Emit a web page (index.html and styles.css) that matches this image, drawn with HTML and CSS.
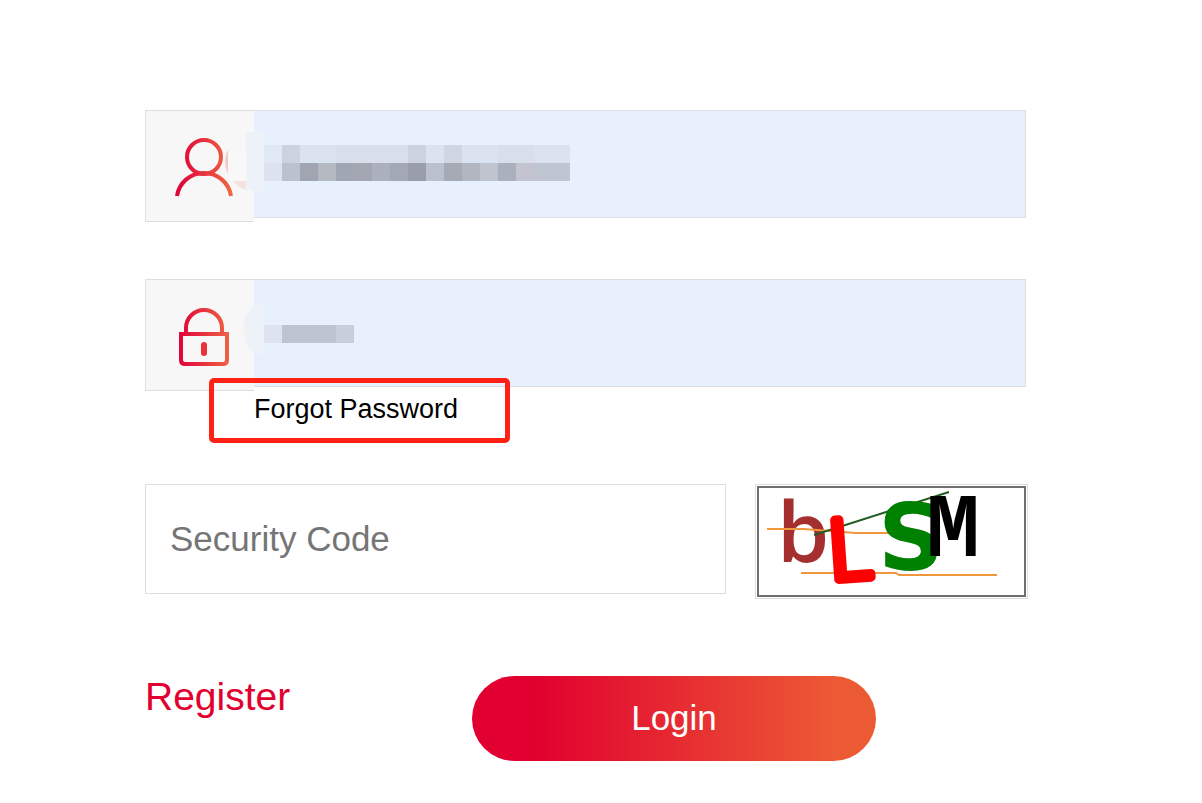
FILE: index.html
```html
<!DOCTYPE html>
<html lang="en">
<head>
  <meta charset="UTF-8">
  <meta name="viewport" content="width=device-width, initial-scale=1">
  <title>Login</title>
  <link rel="stylesheet" href="styles.css">
</head>
<body>
  <form class="login">
    <div class="field">
      <label class="field-icon" for="user" aria-label="User name">
        <svg width="62" height="62" viewBox="0 0 62 62" fill="none" stroke="url(#red)" stroke-width="4">
          <defs>
            <linearGradient id="red" gradientUnits="userSpaceOnUse" x1="2" y1="0" x2="60" y2="0">
              <stop offset="0.1" stop-color="#e1063a"/>
              <stop offset="1" stop-color="#f06a44"/>
            </linearGradient>
          </defs>
          <circle cx="31" cy="20" r="17"/>
          <path d="M4 59C6 46 17 36 31 36S56 46 58 59"/>
        </svg>
      </label>
      <input class="input filled" type="text" id="user" autocomplete="username">
      <svg class="mask" width="426" height="112" aria-hidden="true">
        <path fill="#f8f8f8" d="M83 41h18v30H83z"/>
        <path fill="#f6c9c9" d="M83 39Q77 52 83 64z"/>
        <path fill="#f5e2df" d="M88 71h13v9q-8-2-13-9z"/>
        <path fill="#edf1f8" d="M103 22h16v60q-10 1-18-3V24q0-2 2-2z"/>
        <g shape-rendering="crispEdges">
          <path fill="#dce3f0" d="M119 35h306v18H119z"/>
          <path fill="#e1e8f5" d="M119 35h18v18h-18z"/>
          <path fill="#ccd2de" d="M137 35h18v18h-18zM263 35h18v18h-18z"/>
          <path fill="#d8deea" d="M191 35h72v18h-72zM353 35h36v18h-36z"/>
          <path fill="#d0d6e1" d="M299 35h18v18h-18z"/>
          <path fill="#dde3ee" d="M119 53h18v18h-18z"/>
          <path fill="#bbc1cd" d="M137 53h18v18h-18z"/>
          <path fill="#a0a5b1" d="M155 53h18v18h-18z"/>
          <path fill="#b5bac1" d="M173 53h18v18h-18z"/>
          <path fill="#9fa8b2" d="M191 53h18v18h-18z"/>
          <path fill="#a4a6b1" d="M209 53h18v18h-18z"/>
          <path fill="#abb0bd" d="M227 53h18v18h-18z"/>
          <path fill="#a3a9b4" d="M245 53h18v18h-18z"/>
          <path fill="#999eaa" d="M263 53h18v18h-18z"/>
          <path fill="#bac0ce" d="M281 53h18v18h-18z"/>
          <path fill="#a6aab5" d="M299 53h18v18h-18z"/>
          <path fill="#b2b6c1" d="M317 53h18v18h-18z"/>
          <path fill="#c0c4cf" d="M335 53h18v18h-18z"/>
          <path fill="#abb0bd" d="M353 53h18v18h-18z"/>
          <path fill="#c4c4d0" d="M371 53h18v18h-18z"/>
          <path fill="#bfc5d1" d="M389 53h36v18h-36z"/>
        </g>
      </svg>
    </div>

    <div class="field">
      <label class="field-icon" for="password" aria-label="Password">
        <svg width="62" height="62" viewBox="0 0 62 62" fill="none" stroke="url(#red)" stroke-width="4">
          <path d="M13 27V22a18 18 0 0 1 36 0v5"/>
          <path d="M8 28H54V54q0 4-4 4H12q-4 0-4-4z"/>
          <path d="M31 39v8" stroke="#e9313a" stroke-width="6" stroke-linecap="round"/>
        </svg>
      </label>
      <input class="input filled" type="password" id="password" autocomplete="current-password">
      <svg class="mask" width="426" height="112" aria-hidden="true">
        <path fill="#f6f1ef" d="M101 37q-6 14 0 28z"/>
        <path fill="#edf1f8" d="M119 22v56q-11-3-18-14V37q6-11 18-15z"/>
        <g shape-rendering="crispEdges">
          <path fill="#dde4ef" d="M119 46h18v18h-18z"/>
          <path fill="#bec4d0" d="M137 46h54v18h-54z"/>
          <path fill="#c8cedc" d="M191 46h18v18h-18z"/>
        </g>
      </svg>
    </div>

    <div class="forgot">
      <a class="forgot-link" href="#">Forgot Password</a>
    </div>

    <div class="security">
      <input class="input code" type="text" placeholder="Security Code" aria-label="Security Code">
      <button class="captcha" type="button" aria-label="Refresh security code">
        <svg width="265" height="107" viewBox="0 0 265 107">
          <text class="cap-b" x="18" y="74">b</text>
          <path d="M8 41h37l52 4h36" fill="none" stroke="#f0963c" stroke-width="2"/>
          <path d="M42 85h95l3 2h98" fill="none" stroke="#f0963c" stroke-width="2"/>
          <path d="M55 47L190 4" stroke="#245c24" stroke-width="2"/>
          <text class="cap-l" x="71" y="92" rotate="-4">L</text>
          <text class="cap-s" x="119" y="82">S</text>
          <text class="cap-m" x="167" y="68">M</text>
        </svg>
      </button>
    </div>

    <div class="actions">
      <a class="register" href="#">Register</a>
      <button class="submit" type="submit">Login</button>
    </div>
  </form>
</body>
</html>
```

FILE: styles.css
```css
*{box-sizing: border-box;}
body{
  margin: 0;
  background: #fff;
  font-family: "Liberation Sans", Arial, sans-serif;
}
.login{padding: 110px 176px 40px 145px;}
.field{
  position: relative;
  display: flex;
  align-items: flex-start;
}
.field + .field{margin-top: 57px;}
.field-icon{
  display: flex;
  flex: none;
  align-items: center;
  justify-content: center;
  width: 109px;
  height: 112px;
  padding: 3px 0 0 8px;
  border: 1px solid #dedede;
  border-right: 0;
  background: #f7f7f7;
}
.input{
  flex: 1;
  min-width: 0;
  height: 108px;
  padding: 0 24px;
  border: 1px solid #dedede;
  border-radius: 0;
  background: #fff;
  font-family: inherit;
  font-size: 35px;
}
.input::placeholder{color: #757575;}
.filled{
  border-left: 0;
  background: #e8f0fe;
}
.mask{
  position: absolute;
  top: 0;
  left: 0;
  pointer-events: none;
}

.forgot{padding: 2px 0 0 109px;}
.forgot-link{
  position: relative;
  display: inline-block;
  color: #000;
  font-size: 27px;
  line-height: 32px;
  text-decoration: none;
  vertical-align: top;
}
.forgot-link::after{
  content: "";
  position: absolute;
  inset: -15px -52px -18px -45px;
  border: 5px solid #ff2114;
  border-radius: 5px;
}

.security{
  display: flex;
  align-items: flex-start;
  gap: 29px;
  margin: 59px -2px 0 0;
}
.code{height: 110px;}
.captcha{
  flex: none;
  padding: 1px;
  border: 1px solid #dedede;
  background: #fff;
}
.captcha svg{
  display: block;
  box-sizing: content-box;
  border: 2px solid #6f6f6f;
}
.cap-b{
  fill: #a52f2f;
  font: 600 84px "Open Sans", sans-serif;
}
.cap-l{
  fill: #f00;
  stroke: #f00;
  stroke-width: 9px;
  stroke-linejoin: round;
  font: 300 84px Lato, sans-serif;
}
.cap-s{
  fill: #008000;
  font: bold 92px "DejaVu Sans", sans-serif;
}
.cap-m{
  fill: #000;
  font: bold 90px "Liberation Mono", monospace;
}

.actions{
  display: grid;
  grid-template-columns: 327fr 404fr 150fr;
  align-items: start;
  margin-top: 77px;
}
.register{
  color: #e1002f;
  font-size: 39px;
  line-height: 42px;
  text-decoration: none;
}
.submit{
  height: 85px;
  padding: 0 0 2px;
  border: 0;
  border-radius: 43px;
  background: linear-gradient(90deg, #e1002f 15%, #ec5a34 90%);
  color: #fff;
  font-family: inherit;
  font-size: 35px;
}
```
